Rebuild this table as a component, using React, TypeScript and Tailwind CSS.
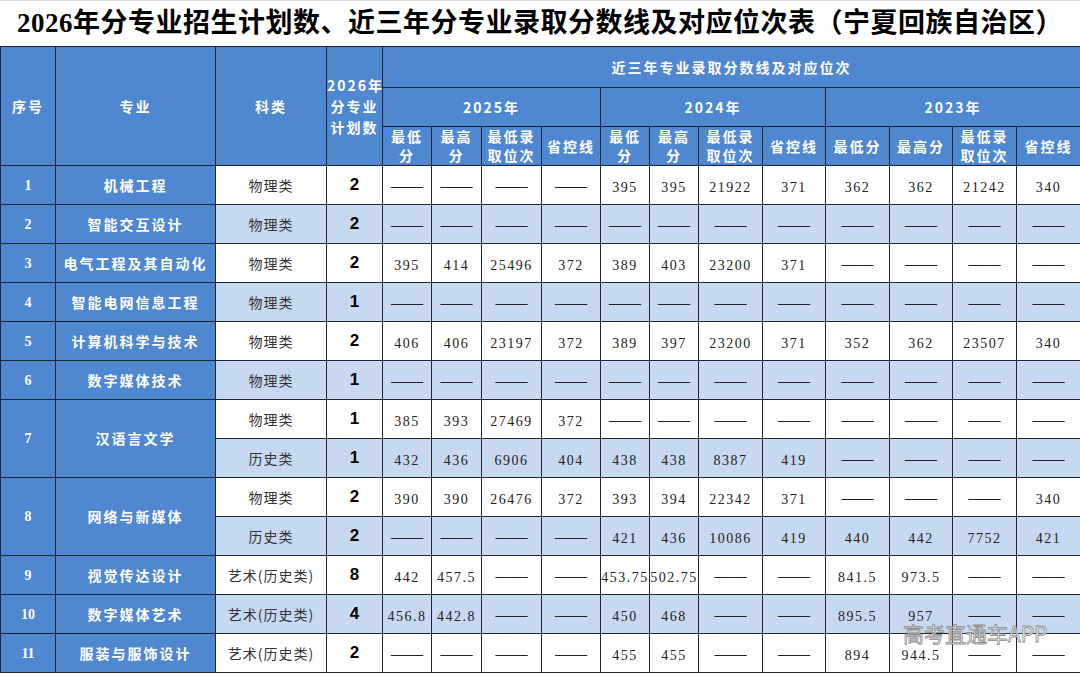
import React from "react";

const D = "—";
const none = [D, D, D, D];

type Row = {
   no?: string;
   major?: string;
   span?: number;
   kind: string;
   plan: string;
   y25: string[];
   y24: string[];
   y23: string[];
};

const rows: Row[] = [
   { no: "1", major: "机械工程", kind: "物理类", plan: "2", y25: none, y24: ["395", "395", "21922", "371"], y23: ["362", "362", "21242", "340"] },
   { no: "2", major: "智能交互设计", kind: "物理类", plan: "2", y25: none, y24: none, y23: none },
   { no: "3", major: "电气工程及其自动化", kind: "物理类", plan: "2", y25: ["395", "414", "25496", "372"], y24: ["389", "403", "23200", "371"], y23: none },
   { no: "4", major: "智能电网信息工程", kind: "物理类", plan: "1", y25: none, y24: none, y23: none },
   { no: "5", major: "计算机科学与技术", kind: "物理类", plan: "2", y25: ["406", "406", "23197", "372"], y24: ["389", "397", "23200", "371"], y23: ["352", "362", "23507", "340"] },
   { no: "6", major: "数字媒体技术", kind: "物理类", plan: "1", y25: none, y24: none, y23: none },
   { no: "7", major: "汉语言文学", span: 2, kind: "物理类", plan: "1", y25: ["385", "393", "27469", "372"], y24: none, y23: none },
   { kind: "历史类", plan: "1", y25: ["432", "436", "6906", "404"], y24: ["438", "438", "8387", "419"], y23: none },
   { no: "8", major: "网络与新媒体", span: 2, kind: "物理类", plan: "2", y25: ["390", "390", "26476", "372"], y24: ["393", "394", "22342", "371"], y23: [D, D, D, "340"] },
   { kind: "历史类", plan: "2", y25: none, y24: ["421", "436", "10086", "419"], y23: ["440", "442", "7752", "421"] },
   { no: "9", major: "视觉传达设计", kind: "艺术(历史类)", plan: "8", y25: ["442", "457.5", D, D], y24: ["453.75", "502.75", D, D], y23: ["841.5", "973.5", D, D] },
   { no: "10", major: "数字媒体艺术", kind: "艺术(历史类)", plan: "4", y25: ["456.8", "442.8", D, D], y24: ["450", "468", D, D], y23: ["895.5", "957", D, D] },
   { no: "11", major: "服装与服饰设计", kind: "艺术(历史类)", plan: "2", y25: none, y24: ["455", "455", D, D], y23: ["894", "944.5", D, D] },
];

const widths = [55, 160, 111, 56, 49, 50, 60, 59, 49, 49, 64, 63, 64, 63, 64, 64];

const cell = "border border-[#1f2533] p-0 text-center align-middle";
const head = `${cell} bg-[#4f88d0] text-white font-bold text-[14px] leading-[19px] tracking-[2px]`;

const Value = ({ v }: { v: string }) =>
   v === D ? (
      <span className="text-[16px] text-[#222] tracking-[0px] font-['Liberation_Serif',serif]">——</span>
   ) : (
      <span className="text-[14px] text-[#222] tracking-[1.5px] font-['Liberation_Serif','Noto_Sans_CJK_SC',serif]">{v}</span>
   );

const App = () => {
   return (
      <div className="relative w-[1080px] h-[674px] bg-white overflow-hidden font-['Noto_Sans_CJK_SC',sans-serif]">
         <div className="h-[46px] flex items-center justify-center border-t border-[#ddd]">
            <h1 className="text-[27px] font-bold text-black tracking-[0.5px] font-['Liberation_Serif','Noto_Sans_CJK_SC',serif]">
               2026年分专业招生计划数、近三年分专业录取分数线及对应位次表（宁夏回族自治区）
            </h1>
         </div>
         <table className="w-[1080px] table-fixed border-collapse">
            <colgroup>
               {widths.map((w, i) => (
                  <col key={i} style={{ width: w }} />
               ))}
            </colgroup>
            <thead>
               <tr className="h-[41px]">
                  <th rowSpan={3} className={head}>序号</th>
                  <th rowSpan={3} className={head}>专业</th>
                  <th rowSpan={3} className={head}>科类</th>
                  <th rowSpan={3} className={`${head} leading-[21px] tracking-[0.5px] whitespace-nowrap`}>
                     2026年
                     <br />
                     分专业
                     <br />
                     计划数
                  </th>
                  <th colSpan={12} className={`${head} tracking-[2.6px]`}>近三年专业录取分数线及对应位次</th>
               </tr>
               <tr className="h-[39px]">
                  <th colSpan={4} className={head}>2025年</th>
                  <th colSpan={4} className={head}>2024年</th>
                  <th colSpan={4} className={head}>2023年</th>
               </tr>
               <tr className="h-[38px]">
                  {["2025", "2024"].map((y) => (
                     <React.Fragment key={y}>
                        <th className={head}>最低<br />分</th>
                        <th className={head}>最高<br />分</th>
                        <th className={`${head} tracking-[1px]`}>最低录<br />取位次</th>
                        <th className={`${head} tracking-[1px]`}>省控线</th>
                     </React.Fragment>
                  ))}
                  <th className={`${head} tracking-[1px]`}>最低分</th>
                  <th className={`${head} tracking-[1px]`}>最高分</th>
                  <th className={`${head} tracking-[1px]`}>最低录<br />取位次</th>
                  <th className={`${head} tracking-[1px]`}>省控线</th>
               </tr>
            </thead>
            <tbody>
               {rows.map((r, i) => {
                  const bg = i % 2 === 1 ? "bg-[#c6d9f0]" : "bg-white";
                  return (
                     <tr key={i} className="h-[39px]">
                        {r.no && (
                           <td rowSpan={r.span || 1} className={`${cell} bg-[#4f88d0] text-white font-bold text-[14px] font-['Liberation_Serif',serif]`}>
                              {r.no}
                           </td>
                        )}
                        {r.major && (
                           <td rowSpan={r.span || 1} className={`${cell} bg-[#4f88d0] text-white font-bold text-[14px] tracking-[2px]`}>
                              {r.major}
                           </td>
                        )}
                        <td className={`${cell} ${bg} text-[14px] text-[#333] tracking-[1px]`}>{r.kind}</td>
                        <td className={`${cell} ${bg} text-[17px] font-bold text-black font-['Liberation_Sans',sans-serif]`}>{r.plan}</td>
                        {[...r.y25, ...r.y24, ...r.y23].map((v, j) => (
                           <td key={j} className={`${cell} ${bg} whitespace-nowrap`}>
                              <Value v={v} />
                           </td>
                        ))}
                     </tr>
                  );
               })}
            </tbody>
         </table>
         <div className="absolute left-[903px] top-[620px] text-[21px] leading-[26px] text-white/90 [-webkit-text-stroke:0.8px_#8a8a8a]">
            高考直通车APP
         </div>
      </div>
   );
};

export default App;
